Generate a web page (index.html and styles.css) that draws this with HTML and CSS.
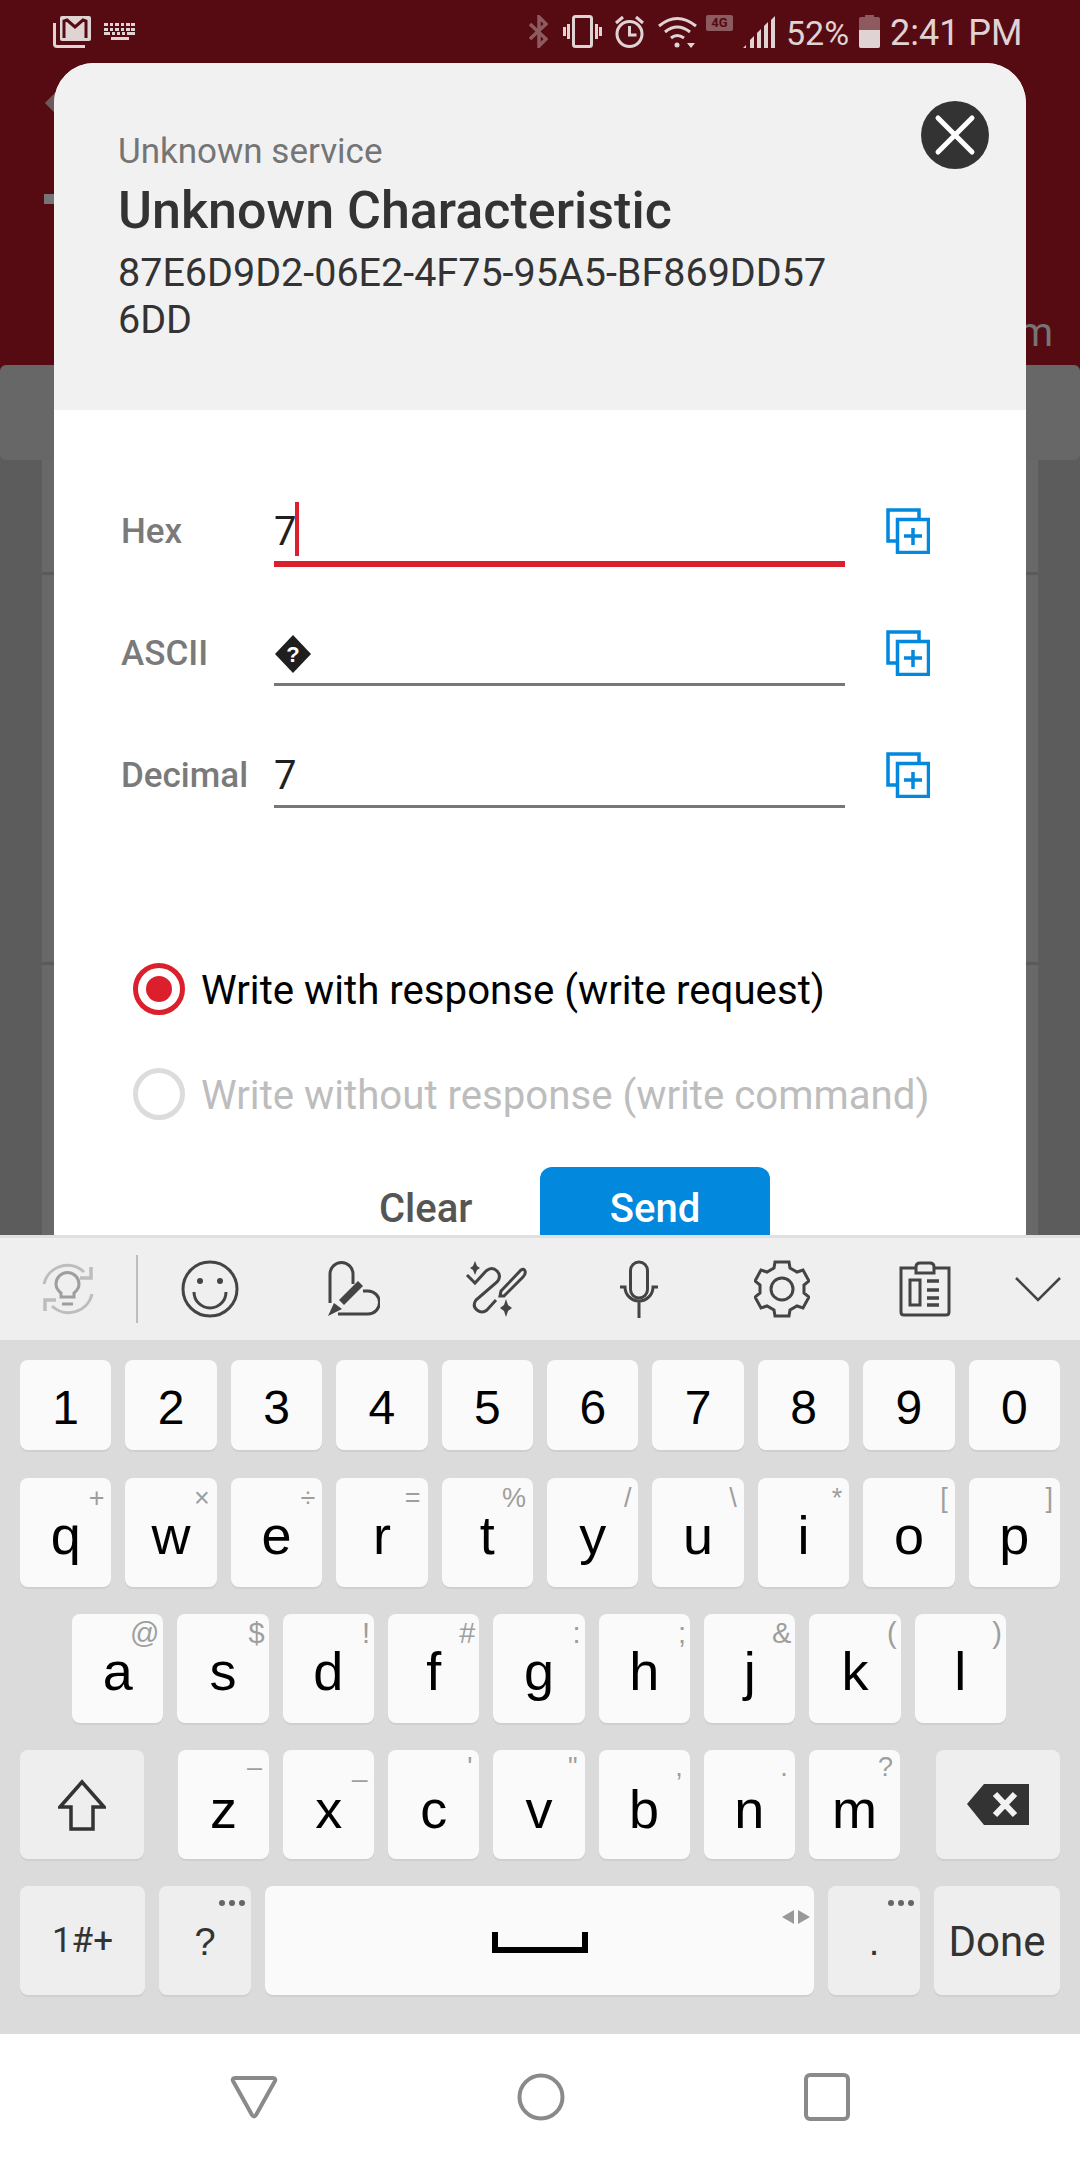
FILE: index.html
```html
<!DOCTYPE html>
<html lang="en">
<head>
    <meta charset="UTF-8">
    <title>Unknown Characteristic</title>
    <link rel="stylesheet" href="styles.css">
</head>
<body>
    <div class="screen">
        <div class="backdrop">
            <div class="statusbar">
                <svg class="st-gmail" width="39" height="33" viewBox="0 0 39 33">
                    <rect x="7" y="1" width="31" height="25" rx="2" fill="#e0d3d4"/>
                    <path d="M11 23V6l3-1 8 7 8-7 3 1v17" fill="none" stroke="#560b12" stroke-width="3"/>
                    <path d="M1.5 8v21q0 2.5 2.5 2.5h28" fill="none" stroke="#e0d3d4" stroke-width="3"/>
                </svg>
                <svg class="st-kbd" width="31" height="17" viewBox="0 0 31 17" fill="#e0d3d4">
                    <path d="M0 0h4v3H0zM6 0h3v3H6zM11 0h4v3h-4zM17 0h3v3h-3zM22 0h4v3h-4zM27 0h4v3h-4zM0 5h4v3H0zM6 5h3v3H6zM11 5h4v3h-4zM17 5h3v3h-3zM22 5h4v3h-4zM27 5h4v3h-4zM0 9h6v3H0zM8 9h3v3H8zM13 9h3v3h-3zM18 9h3v3h-3zM23 9h8v3h-8zM7 14h18v3H7z"/>
                </svg>
                <div class="st-right">
                    <svg width="19" height="33" viewBox="0 0 19 33" fill="none" stroke="#8c5a5f" stroke-width="3.5">
                        <path d="M1 9l16 15-7 7V2l7 7L1 24"/>
                    </svg>
                    <svg class="st-vib" width="39" height="33" viewBox="0 0 39 33" fill="none" stroke="#e0d3d4" stroke-width="3">
                        <rect x="10.5" y="1.5" width="18" height="30" rx="2"/>
                        <path d="M5.5 9v15M1.5 12v9M33.5 9v15M37.5 12v9"/>
                    </svg>
                    <svg class="st-alarm" width="29" height="33" viewBox="0 0 29 33" fill="none" stroke="#e0d3d4" stroke-width="3">
                        <circle cx="14.5" cy="19" r="12.5"/>
                        <path d="M14.5 11v9h7M1 8l7-6M28 8l-7-6"/>
                    </svg>
                    <svg class="st-wifi" width="39" height="33" viewBox="0 0 39 33" fill="none" stroke="#e0d3d4" stroke-width="3">
                        <path d="M1 11q18-15 37 0M7 17q12-10 25 0M13 23q6-5 13 0"/>
                        <circle cx="19" cy="30" r="2.5" fill="#e0d3d4" stroke="none"/>
                        <path d="M29 28h8l-4 5z" fill="#e0d3d4" stroke="none"/>
                    </svg>
                    <span class="st-4g">4G</span>
                    <svg class="st-signal" width="32" height="32" viewBox="0 0 32 32" fill="#e0d3d4">
                        <path d="M0 32l3-3v3zM7 32v-8l4-4v12zM14 32V17l4-4v19zM21 32V10l4-4v26zM28 32V4l4-4v32z"/>
                    </svg>
                    <span class="st-text st-pct">52%</span>
                    <div class="st-batt"><div class="st-batt-fill"></div></div>
                    <span class="st-text st-time">2:41 PM</span>
                </div>
            </div>
            <div class="appbar">
                <span class="appbar-back"></span>
                <span class="appbar-mark"></span>
                <span class="appbar-end">m</span>
            </div>
            <div class="tabstrip"></div>
            <div class="card-list">
                <div class="card-row"></div>
                <div class="card-row card-row-tall"></div>
            </div>
        </div>

        <div class="modal">
            <div class="modal-head">
                <div class="service">Unknown service</div>
                <div class="char-name">Unknown Characteristic</div>
                <div class="uuid">87E6D9D2-06E2-4F75-95A5-BF869DD57<br>6DD</div>
                <div class="close-btn">
                    <svg width="44" height="44" viewBox="0 0 44 44">
                        <path d="M5 5l34 34M39 5L5 39" stroke="#fff" stroke-width="5" stroke-linecap="round"/>
                    </svg>
                </div>
            </div>
            <div class="modal-body">
                <div class="field">
                    <label class="field-label">Hex</label>
                    <div class="field-input field-focus">7<span class="caret"></span></div>
                    <svg class="copy-icon" width="44" height="46" viewBox="0 0 44 46" fill="none" stroke="#0288dc" stroke-width="3.5">
                        <path d="M33 10V2H2v31h9"/>
                        <rect x="11.5" y="11.5" width="31" height="33" fill="#fff"/>
                        <path d="M27 20v17M18 28h18"/>
                    </svg>
                </div>
                <div class="field">
                    <label class="field-label">ASCII</label>
                    <div class="field-input">
                        <svg class="bad-char" width="38" height="38" viewBox="0 0 38 38">
                            <path d="M19 0l18 19-18 19L1 19z" fill="#1f1f1f"/>
                            <text x="19" y="27" text-anchor="middle" class="bad-char-q">?</text>
                        </svg>
                    </div>
                    <svg class="copy-icon" width="44" height="46" viewBox="0 0 44 46" fill="none" stroke="#0288dc" stroke-width="3.5">
                        <path d="M33 10V2H2v31h9"/>
                        <rect x="11.5" y="11.5" width="31" height="33" fill="#fff"/>
                        <path d="M27 20v17M18 28h18"/>
                    </svg>
                </div>
                <div class="field">
                    <label class="field-label">Decimal</label>
                    <div class="field-input">7</div>
                    <svg class="copy-icon" width="44" height="46" viewBox="0 0 44 46" fill="none" stroke="#0288dc" stroke-width="3.5">
                        <path d="M33 10V2H2v31h9"/>
                        <rect x="11.5" y="11.5" width="31" height="33" fill="#fff"/>
                        <path d="M27 20v17M18 28h18"/>
                    </svg>
                </div>

                <div class="radios">
                    <div class="radio-row">
                        <span class="radio radio-on"><span class="radio-dot"></span></span>
                        <span class="radio-text">Write with response (write request)</span>
                    </div>
                    <div class="radio-row radio-off">
                        <span class="radio"></span>
                        <span class="radio-text">Write without response (write command)</span>
                    </div>
                </div>

                <div class="actions">
                    <button type="button" class="btn-clear">Clear</button>
                    <button type="button" class="btn-send">Send</button>
                </div>
            </div>
        </div>

        <div class="keyboard">
            <div class="kb-tools">
                <div class="tool tool-first">
                    <svg width="52" height="54" viewBox="0 0 52 54" fill="none" stroke="#bdbdbd" stroke-width="3">
                        <path d="M2 22A24 24 0 0 1 42 10M50 32A24 24 0 0 1 10 44"/>
                        <path d="M49 5v11H38M3 49V38h11" stroke-width="3.5"/>
                        <path d="M19 31q-5-4-5-9a11 11 0 0 1 23 0q0 5-5 9v4H19z" stroke="#9e9e9e"/>
                        <path d="M20 42h11" stroke="#9e9e9e"/>
                    </svg>
                </div>
                <div class="tool">
                    <svg width="58" height="58" viewBox="0 0 58 58" fill="none" stroke="#444" stroke-width="3">
                        <circle cx="29" cy="29" r="27"/>
                        <circle cx="19" cy="21" r="3" fill="#444" stroke="none"/>
                        <circle cx="39" cy="21" r="3" fill="#444" stroke="none"/>
                        <path d="M13 32a16 16 0 0 0 32 0"/>
                    </svg>
                </div>
                <div class="tool">
                    <svg width="54" height="56" viewBox="0 0 54 56" fill="none" stroke="#444" stroke-width="3">
                        <path d="M4 42V13a11 11 0 0 1 23 0v10M37 30h5a11 11 0 0 1 0 23H12"/>
                        <path d="M35 25L16 44l-5-5 19-19z" fill="#444" stroke="none" transform="translate(2 0)"/>
                        <path d="M2 55l6-13 8 6z" fill="#444" stroke="none"/>
                    </svg>
                </div>
                <div class="tool">
                    <svg width="62" height="56" viewBox="0 0 62 56" fill="none" stroke="#444" stroke-width="3">
                        <path d="M2 14l8 8 11-12q6-5 11 0t0 11L11 39q-4 6 1 10t10 0l9-10"/>
                        <path d="M38 30l20-21q3-2 4 1t-2 6L41 35h-4z" transform="translate(-2 0)"/>
                        <path d="M10 0l2 5 3 2-3 2-2 5-2-5-3-2 3-2zM41 38l2 6 4 3-4 3-2 6-2-6-4-3 4-3z" fill="#444" stroke="none"/>
                    </svg>
                </div>
                <div class="tool">
                    <svg width="40" height="58" viewBox="0 0 40 58" fill="none" stroke="#444" stroke-width="3">
                        <rect x="11.5" y="2" width="17" height="36" rx="8.5"/>
                        <path d="M1 27h5a14 14 0 0 0 28 0h5M20 42v16"/>
                    </svg>
                </div>
                <div class="tool">
                    <svg width="56" height="58" viewBox="0 0 56 58" fill="none" stroke="#444" stroke-width="3">
                        <circle cx="28" cy="29" r="11"/>
                        <path d="M21 2h14l1 6 7 4 6-2 6 11-5 4v8l5 4-6 11-6-2-7 4-1 6H21l-1-6-7-4-6 2-6-11 5-4v-8l-5-4 6-11 6 2 7-4z"/>
                    </svg>
                </div>
                <div class="tool">
                    <svg width="52" height="56" viewBox="0 0 52 56" fill="none" stroke="#444" stroke-width="3">
                        <path d="M16 7H2v44q0 3 3 3h42q3 0 3-3V7H36"/>
                        <path d="M17 12V6q0-4 4-4h10q4 0 4 4v6z"/>
                        <rect x="11" y="19" width="10" height="25"/>
                        <path d="M28 20h12M28 29h12M28 37h12M28 44h12" stroke-width="3.5"/>
                    </svg>
                </div>
                <div class="tool tool-last">
                    <svg width="46" height="26" viewBox="0 0 46 26" fill="none" stroke="#444" stroke-width="2.5">
                        <path d="M1 2l22 22L45 2"/>
                    </svg>
                </div>
            </div>

            <div class="kb-keys">
                <div class="kb-row kb-digits">
                    <div class="key">1</div>
                    <div class="key">2</div>
                    <div class="key">3</div>
                    <div class="key">4</div>
                    <div class="key">5</div>
                    <div class="key">6</div>
                    <div class="key">7</div>
                    <div class="key">8</div>
                    <div class="key">9</div>
                    <div class="key">0</div>
                </div>
                <div class="kb-row kb-qwerty">
                    <div class="key">q<span class="hint">+</span></div>
                    <div class="key">w<span class="hint">×</span></div>
                    <div class="key">e<span class="hint">÷</span></div>
                    <div class="key">r<span class="hint">=</span></div>
                    <div class="key">t<span class="hint">%</span></div>
                    <div class="key">y<span class="hint">/</span></div>
                    <div class="key">u<span class="hint">\</span></div>
                    <div class="key">i<span class="hint">*</span></div>
                    <div class="key">o<span class="hint">[</span></div>
                    <div class="key">p<span class="hint">]</span></div>
                </div>
                <div class="kb-row kb-home">
                    <div class="key">a<span class="hint">@</span></div>
                    <div class="key">s<span class="hint">$</span></div>
                    <div class="key">d<span class="hint">!</span></div>
                    <div class="key">f<span class="hint">#</span></div>
                    <div class="key">g<span class="hint">:</span></div>
                    <div class="key">h<span class="hint">;</span></div>
                    <div class="key">j<span class="hint">&amp;</span></div>
                    <div class="key">k<span class="hint">(</span></div>
                    <div class="key">l<span class="hint">)</span></div>
                </div>
                <div class="kb-row kb-bottom">
                    <div class="key key-fn key-shift">
                        <svg width="48" height="52" viewBox="0 0 48 52" fill="none" stroke="#333" stroke-width="3.5">
                            <path d="M24 3L2 28h11v22h22V28h11z"/>
                        </svg>
                    </div>
                    <div class="key">z<span class="hint">–</span></div>
                    <div class="key">x<span class="hint">_</span></div>
                    <div class="key">c<span class="hint">'</span></div>
                    <div class="key">v<span class="hint">"</span></div>
                    <div class="key">b<span class="hint">,</span></div>
                    <div class="key">n<span class="hint">.</span></div>
                    <div class="key">m<span class="hint">?</span></div>
                    <div class="key key-fn key-back">
                        <svg width="62" height="42" viewBox="0 0 62 42">
                            <path d="M17 0h45v41H17L0 20z" fill="#333"/>
                            <path d="M28 10l20 21M48 10L28 31" stroke="#f2f2f2" stroke-width="6"/>
                        </svg>
                    </div>
                </div>
                <div class="kb-row kb-space">
                    <div class="key key-fn key-sym">1#+</div>
                    <div class="key key-fn key-punct">?<span class="dots"></span></div>
                    <div class="key key-spacebar">
                        <svg class="space-mark" width="96" height="22" viewBox="0 0 96 22" fill="none" stroke="#000" stroke-width="6">
                            <path d="M3 0v18h90V0"/>
                        </svg>
                        <svg class="space-arrows" width="28" height="14" viewBox="0 0 28 14" fill="#999">
                            <path d="M12 0v14L0 7zM16 0v14l12-7z"/>
                        </svg>
                    </div>
                    <div class="key key-fn key-punct">.<span class="dots"></span></div>
                    <div class="key key-fn key-done">Done</div>
                </div>
            </div>
        </div>

        <div class="navbar">
            <svg width="48" height="44" viewBox="0 0 48 44" fill="none" stroke="#8a8a8a" stroke-width="4">
                <path d="M5 3h38q3 0 2 3L26 40q-2 3-4 0L3 6q-1-3 2-3z"/>
            </svg>
            <svg width="48" height="48" viewBox="0 0 48 48" fill="none" stroke="#8a8a8a" stroke-width="4">
                <circle cx="24" cy="24" r="21.5"/>
            </svg>
            <svg width="46" height="48" viewBox="0 0 46 48" fill="none" stroke="#8a8a8a" stroke-width="4">
                <rect x="2" y="2" width="42" height="44" rx="4"/>
            </svg>
        </div>
    </div>
</body>
</html>
```

FILE: styles.css
```css
html, body {
    margin: 0;
    padding: 0;
}

body {
    font-family: Roboto, "Liberation Sans", sans-serif;
}

.screen {
    position: relative;
    width: 1080px;
    height: 2160px;
    overflow: hidden;
    background: #fff;
}

/* Dimmed page behind the dialog */
.backdrop {
    height: 1235px;
    background: #5c5c5c;
    overflow: hidden;
}

.statusbar {
    display: flex;
    align-items: flex-start;
    height: 63px;
    padding: 15px 0 0 53px;
    box-sizing: border-box;
    background: #560b12;
}

.st-kbd {
    margin: 8px 0 0 12px;
}

.st-right {
    display: flex;
    align-items: flex-start;
    margin-left: auto;
    width: 551px;
}

.st-vib {
    margin-left: 15px;
}

.st-alarm {
    margin-left: 13px;
}

.st-wifi {
    margin-left: 14px;
}

.st-4g {
    width: 27px;
    height: 16px;
    margin-left: 9px;
    border-radius: 2px;
    background: #8c5a5f;
    color: #560b12;
    font-size: 13px;
    font-weight: 700;
    line-height: 16px;
    text-align: center;
}

.st-signal {
    margin: 1px 0 0 10px;
}

.st-text {
    margin-top: 2px;
    color: #e0d3d4;
    font-size: 36px;
    line-height: 33px;
}

.st-pct {
    width: 60px;
    margin-left: 11px;
    font-size: 34px;
}

.st-batt {
    position: relative;
    width: 21px;
    height: 31px;
    margin: 2px 0 0 13px;
    border-radius: 2px;
    background: #8c5a5f;
}

.st-batt::before {
    content: "";
    position: absolute;
    top: -2px;
    left: 6px;
    width: 9px;
    height: 2px;
    background: #8c5a5f;
}

.st-batt-fill {
    position: absolute;
    left: 0;
    right: 0;
    bottom: 0;
    height: 18px;
    border-radius: 0 0 2px 2px;
    background: #e0d3d4;
}

.st-time {
    margin-left: 10px;
}

.appbar {
    position: relative;
    height: 302px;
    background: #560b12;
    box-shadow: 0 8px 0 #560b12;
}

.appbar-back {
    position: absolute;
    left: 49px;
    top: 30px;
    width: 20px;
    height: 20px;
    background: #6e5a5c;
    transform: rotate(45deg);
}

.appbar-mark {
    position: absolute;
    left: 44px;
    top: 131px;
    width: 12px;
    height: 10px;
    background: #757575;
}

.appbar-end {
    position: absolute;
    right: 27px;
    top: 246px;
    color: #757575;
    font-size: 40px;
}

.tabstrip {
    position: relative;
    height: 95px;
    border-radius: 6px;
    background: #676767;
}

.card-list {
    height: 775px;
    margin: 0 42px;
    background: #686868;
}

.card-row {
    height: 112px;
    border-bottom: 3px solid #5a5a5a;
}

.card-row-tall {
    height: 387px;
}

/* Dialog */
.modal {
    position: absolute;
    top: 63px;
    left: 54px;
    width: 972px;
    height: 1172px;
    border-radius: 40px 40px 0 0;
    overflow: hidden;
    background: #fff;
}

.modal-head {
    position: relative;
    height: 347px;
    padding: 69px 0 0 64px;
    box-sizing: border-box;
    background: #f1f1f1;
}

.service {
    color: #757575;
    font-size: 35px;
    line-height: 40px;
}

.char-name {
    margin-top: 10px;
    color: #333;
    font-size: 52px;
    font-weight: 500;
    line-height: 58px;
}

.uuid {
    margin-top: 9px;
    color: #333;
    font-size: 39.5px;
    line-height: 47px;
}

.close-btn {
    position: absolute;
    top: 38px;
    right: 37px;
    display: flex;
    align-items: center;
    justify-content: center;
    width: 68px;
    height: 68px;
    border-radius: 50%;
    background: #333;
}

.modal-body {
    padding: 80px 0 0 67px;
}

.field {
    display: flex;
    align-items: flex-start;
    height: 122px;
}

.field-label {
    width: 153px;
    padding-top: 22px;
    color: #7a7a7a;
    font-size: 35px;
    font-weight: 500;
    line-height: 40px;
}

.field-input {
    position: relative;
    display: flex;
    align-items: center;
    width: 571px;
    height: 74px;
    padding-top: 11px;
    box-sizing: border-box;
    border-bottom: 3px solid #777;
    color: #1f1f1f;
    font-size: 40px;
}

.field-focus {
    height: 77px;
    border-bottom: 6px solid #dc1f2c;
}

.caret {
    position: absolute;
    top: 12px;
    left: 21px;
    width: 4px;
    height: 54px;
    background: #dc1f2c;
}

.bad-char {
    margin-top: 2px;
}

.bad-char-q {
    fill: #fff;
    font-family: "Liberation Sans", sans-serif;
    font-size: 22px;
    font-weight: 700;
}

.copy-icon {
    margin: 18px 0 0 41px;
}

.radios {
    margin: 80px 0 0 12px;
}

.radio-row {
    display: flex;
    align-items: center;
    gap: 16px;
    height: 105px;
    color: #000;
    font-size: 40.2px;
}

.radio-text {
    padding-top: 3px;
}

.radio-off {
    color: #bdbdbd;
}

.radio {
    display: flex;
    align-items: center;
    justify-content: center;
    width: 52px;
    height: 52px;
    border: 5px solid #dcdcdc;
    border-radius: 50%;
    box-sizing: border-box;
}

.radio-on {
    border-color: #dc1f2c;
}

.radio-dot {
    width: 26px;
    height: 26px;
    border-radius: 50%;
    background: #dc1f2c;
}

.actions {
    display: flex;
    margin: 21px 0 0 258px;
}

.actions button {
    height: 90px;
    border: none;
    font-family: inherit;
    font-size: 40px;
    font-weight: 500;
    padding: 0 0 8px;
}

.btn-clear {
    width: 92px;
    margin-right: 69px;
    background: none;
    color: #555;
}

.btn-send {
    width: 230px;
    border-radius: 12px 12px 0 0;
    background: #0288dc;
    color: #fff;
}

/* Keyboard */
.keyboard {
    height: 799px;
    background: #dbdbdb;
}

.kb-tools {
    display: flex;
    align-items: center;
    height: 102px;
    border-top: 3px solid #e0e0e0;
    background: #efefef;
}

.tool {
    display: flex;
    align-items: center;
    justify-content: center;
    width: 143px;
}

.tool-first {
    width: 138px;
    height: 68px;
    border-right: 2px solid #bdbdbd;
    box-sizing: border-box;
}

.tool-last {
    width: 83px;
}

.kb-keys {
    display: flex;
    flex-direction: column;
    gap: 27px;
    padding: 20px 20px 0;
}

.kb-row {
    display: flex;
    gap: 14px;
    height: 109px;
}

.kb-digits {
    height: 90px;
    margin-bottom: 1px;
}

.kb-home {
    padding: 0 54px 0 52px;
}

.key {
    position: relative;
    flex: 1;
    min-width: 0;
    padding-top: 30px;
    box-sizing: border-box;
    border-radius: 8px;
    box-shadow: 0 2px 0 #cfcfcf;
    background: #fafafa;
    color: #000;
    font-family: "Liberation Sans", sans-serif;
    font-size: 54px;
    line-height: 54px;
    text-align: center;
}

.kb-digits .key {
    padding-top: 23px;
    font-size: 48px;
    line-height: 50px;
}

.kb-bottom .key {
    padding-top: 32px;
}

.hint {
    position: absolute;
    top: 5px;
    right: 7px;
    color: #9e9e9e;
    font-size: 27px;
    line-height: 30px;
}

.kb-home .hint {
    top: 4px;
    right: 4px;
    font-size: 29px;
}

.kb-bottom .hint {
    top: 2px;
}

.key-fn {
    background: #eeeeee;
}

.kb-bottom .key-shift,
.kb-bottom .key-back {
    flex: none;
    width: 124px;
    display: flex;
    align-items: center;
    justify-content: center;
    padding: 0;
}

.kb-bottom .key-shift {
    margin-right: 20px;
}

.kb-bottom .key-back {
    margin-left: 22px;
}

.kb-space .key {
    flex: none;
    width: 92px;
}

.kb-space .key-sym {
    width: 125px;
    padding-top: 28px;
    color: #333;
    font-family: Roboto, sans-serif;
    font-size: 35px;
}

.kb-space .key-punct {
    padding-top: 29px;
    color: #333;
    font-size: 38px;
}

.dots {
    position: absolute;
    top: 14px;
    right: 6px;
    width: 6px;
    height: 6px;
    border-radius: 50%;
    background: #666;
    box-shadow: -10px 0 0 #666, -20px 0 0 #666;
}

.kb-space .key-spacebar {
    width: 549px;
    padding: 0;
}

.space-mark {
    position: absolute;
    left: 227px;
    top: 46px;
}

.space-arrows {
    position: absolute;
    right: 4px;
    top: 24px;
}

.kb-space .key-done {
    width: 126px;
    padding-top: 29px;
    color: #333;
    font-family: Roboto, sans-serif;
    font-size: 42px;
}

.navbar {
    position: absolute;
    left: 0;
    right: 0;
    bottom: 0;
    display: flex;
    align-items: center;
    justify-content: center;
    gap: 239px;
    height: 126px;
    padding-right: 1px;
    background: #fff;
}
```
